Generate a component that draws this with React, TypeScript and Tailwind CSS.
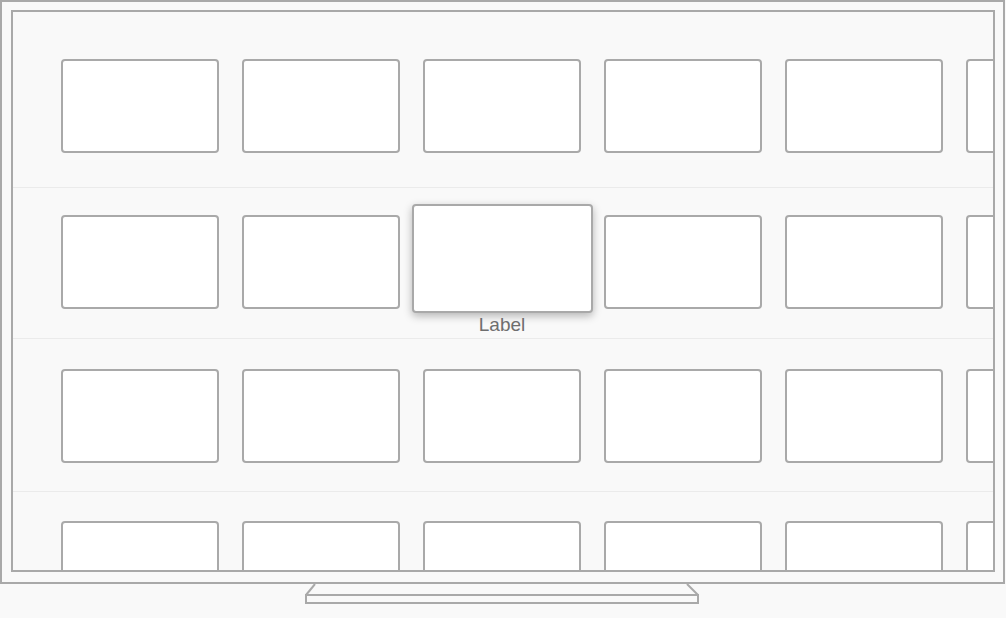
const cols = [0, 1, 2, 3, 4, 5];

const rows = [
  { h: 'h-[176px]', pt: 'pt-[47px]', sep: true, focus: -1 },
  { h: 'h-[151px]', pt: 'pt-[27px]', sep: true, focus: 2 },
  { h: 'h-[153px]', pt: 'pt-[30px]', sep: true, focus: -1 },
  { h: 'h-[80px]', pt: 'pt-[29px]', sep: false, focus: -1 },
];

const Card = ({ focused }: { focused?: boolean }) => {
  if (focused) {
    return (
      <div className="relative w-[158px] h-[94px] shrink-0">
        <div className="absolute left-[-11px] top-[-11px] w-[181px] h-[109px] bg-white border-2 border-[#a9a9a9] rounded-[4px] shadow-[0_3px_8px_rgba(0,0,0,0.28)]" />
        <div className="absolute left-[-20px] right-[-20px] top-[99px] text-center text-[19px] leading-[22px] text-[#6e6e6e] font-['Liberation_Sans',Arial,sans-serif]">
          Label
        </div>
      </div>
    );
  }
  return <div className="w-[158px] h-[94px] shrink-0 bg-white border-2 border-[#a9a9a9] rounded-[4px]" />;
};

export default function App() {
  return (
    <div className="w-[1006px] h-[618px] bg-[#f9f9f9] overflow-hidden">
      {/* TV body */}
      <div className="w-[1005px] h-[584px] border-2 border-[#a9a9a9] pt-[8px] pl-[9px] pr-[8px] pb-[10px]">
        <div className="h-full border-2 border-[#a9a9a9] bg-[#f9f9f9] overflow-hidden">
          {rows.map((r, ri) => (
            <div key={ri} className={`${r.h} ${r.pt} ${r.sep ? 'border-b border-[#ebebeb]' : ''} pl-[48px] flex gap-[23px]`}>
              {cols.map((c) => (
                <Card key={c} focused={r.focus === c} />
              ))}
            </div>
          ))}
        </div>
      </div>
      {/* stand */}
      <svg className="ml-[304px] block" width="396" height="22" viewBox="0 0 396 22" fill="none" stroke="#a9a9a9" strokeWidth="2">
        <path d="M11 0 L2 11" />
        <path d="M383 0 L394 11" />
        <rect x="2" y="11" width="392" height="8" />
      </svg>
    </div>
  );
}
